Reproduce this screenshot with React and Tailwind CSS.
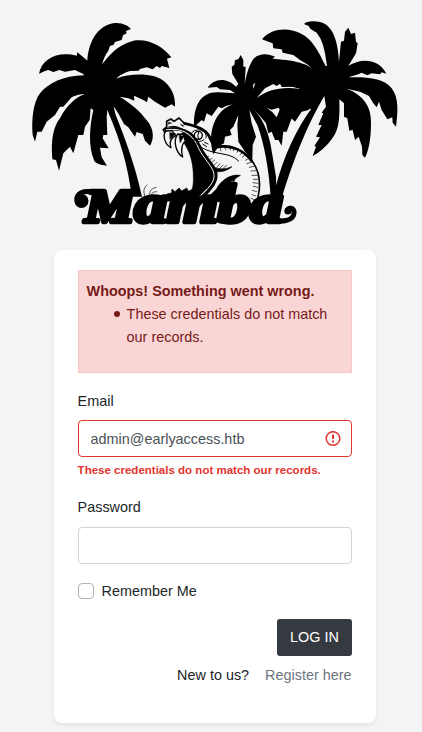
import React from "react";

function LeftPalm() {
  return (
    <g transform="translate(20 10) scale(.33333)">
      <path d="M202 152 C205 100 230 45 285 39 C310 38 325 48 333 57 L318 63 L320 70 L309 76 L305 90 L285 96 L281 104 L270 108 L265 122 C255 135 250 150 246 163 C265 140 290 105 340 92 C385 84 430 110 454 142 L441 146 L448 174 L425 168 L420 174 L410 168 L398 178 L380 172 L360 177 L356 182 L330 183 C315 187 300 195 288 206 C320 192 370 190 400 198 C440 208 468 245 465 290 L455 283 L435 293 L405 275 L385 260 L381 277 L370 270 L342 257 L343 272 L325 265 L299 260 C340 285 365 310 375 325 C405 355 402 390 390 407 L375 392 L368 372 L350 366 L345 380 L325 352 L312 342 L296 312 L281 289 L286 312 C315 385 345 465 366 560 L335 560 C325 470 300 390 266 310 L262 300 L260 320 L262 375 L250 375 L248 385 L266 415 L240 413 L245 442 L261 467 C240 465 225 460 222 450 C205 410 208 350 220 300 L212 295 L209 330 L195 350 L190 375 L175 375 L160 430 L150 410 L130 430 L117 482 L108 450 L97 448 C92 390 100 350 120 325 C140 285 170 260 195 252 C180 252 165 257 155 262 L130 290 L120 290 L105 315 L80 335 L65 365 L52 365 L45 395 L38 375 C34 330 40 275 60 250 C85 220 130 197 192 196 L190 192 L165 180 L135 185 L118 180 L100 186 L85 180 L75 183 L57 191 C65 145 115 122 170 137 L172 127 L200 150 Z" />
    </g>
  );
}

function MiddlePalm() {
  return (
    <g transform="translate(180 10) scale(.33333)">
      <path d="M175 222 L157 192 L155 170 L163 165 L165 150 L175 148 L182 135 L190 150 L190 170 L197 170 L194 225 C199 190 210 160 222 145 C242 128 265 132 285 140 L274 150 C310 145 345 152 380 165 L425 195 L420 218 L352 235 L320 225 L305 218 L290 228 L280 222 L255 235 L230 264 C270 232 330 225 395 245 L401 285 L385 300 L365 305 L345 335 L335 325 L320 365 L310 365 L305 407 L295 390 L285 390 L275 365 L265 370 L258 340 L240 318 L222 298 C245 325 262 355 272 405 L288 500 L290 565 L272 565 C268 485 253 400 232 345 L208 300 L215 340 L228 380 L218 405 L217 450 L195 425 L175 395 L172 345 L175 315 L160 350 L150 360 L155 375 L135 380 L132 400 L115 410 L100 433 C80 370 105 295 165 281 L140 287 L125 295 L115 290 L95 318 L80 310 L72 335 L65 330 L42 352 C40 290 60 245 115 247 L165 250 L150 240 L120 238 L110 231 L83 233 C100 205 140 200 168 230 Z" />
      <path fill="#f3f4f6" d="M261 294 L275 299 L296 293 L299 299 L290 322 Q278 304 261 294 Z M219 224 L226 218 L220 237 Z" />
    </g>
  );
}

function RightPalm() {
  return (
    <g transform="translate(280 10) scale(.33333)">
      <path d="M141 168 L135 130 L129 105 L121 85 L110 68 L92 57 L85 47 L73 43 C70 34 115 28 135 42 C165 60 175 110 177 155 L183 95 L192 92 L195 65 L205 53 L213 72 L225 68 L228 95 L233 100 L228 130 L205 168 C240 145 295 143 319 191 L305 187 L300 193 L275 190 L262 196 L245 188 L235 193 L205 202 C260 200 315 205 335 235 C358 265 353 310 348 350 L338 338 L337 322 L322 328 L305 300 L297 275 L290 292 L280 280 L267 258 L240 245 L200 236 C250 255 275 290 273 340 C273 390 265 425 255 443 L247 435 L246 410 L236 380 L225 390 L218 360 L208 362 L202 325 L192 320 L192 280 L178 268 C180 330 175 360 160 380 C140 410 120 425 98 438 L108 410 L103 408 L120 382 L108 380 L125 345 L115 345 L130 310 L125 308 L138 290 L133 258 C93 325 45 430 5 565 L-14 565 L-14 535 C10 440 50 355 97 292 L107 270 L95 300 L78 285 L65 300 L40 330 L30 322 L40 245 L60 238 L48 230 L5 231 L-2 217 L-50 210 L-55 145 C20 145 90 170 120 205 L85 165 L60 150 L40 135 L8 128 L5 118 L-20 115 L-22 100 L-35 95 L-54 88 C-30 60 5 54 40 62 C95 75 115 125 137 168 Z" />
    </g>
  );
}

function Snake() {
  return (
    <g transform="translate(150 105) scale(.33333)" stroke="#000" strokeLinecap="round" strokeLinejoin="round">
      {/* head and coiled body */}
      <path fill="none" strokeWidth="5" d="M45 84 L40 74 L50 66 L50 49 L63 42 L72 49 L87 39 L103 55 C132 64 158 69 177 91 C186 104 181 119 202 126 C244 116 285 137 307 169 C338 213 332 260 315 305" />
      <path strokeWidth="8" fill="none" d="M103 55 C132 61 165 71 176 91 C184 107 185 119 202 126 C244 118 283 137 305 168" />
      {/* open mouth */}
      <path strokeWidth="2" d="M99 82 C142 99 158 153 187 181 C207 207 193 238 165 256 L136 288 L35 288 L50 269 L125 258 C132 239 130 218 130 207 C129 170 119 137 100 111 L89 95 Z" />
      <path fill="none" strokeWidth="10" d="M48 73 C97 67 128 83 144 116 C158 151 184 172 196 198 C204 225 187 249 151 281" />
      <path fill="none" stroke="#f3f4f6" strokeWidth="3" d="M49 74 C98 68 124 86 141 119 C153 152 179 173 190 199 C198 224 184 242 153 270" />
      <path fill="#000" strokeWidth="2" d="M270 211 C239 206 211 229 199 253 L160 290 L215 290 L222 260 L237 232 L251 226 L243 243 L256 221 Z" />
      {/* fangs */}
      <path fill="#f3f4f6" strokeWidth="4" d="M48 78 C36 91 45 119 63 128 C56 112 62 101 77 91 L66 77 Z M83 87 C68 108 78 143 98 156 C92 133 96 116 106 108 L99 88 Z" />
      <path strokeWidth="2" d="M60 83 L76 86 L61 102 Z M88 91 L101 94 L91 112 Z" />
      <path strokeWidth="1" d="M54 66 Q72 60 87 67 L98 72 L74 68 Z M92 57 L103 64 L96 63 Z M56 52 L66 54 L54 58 Z" />
      {/* eye */}
      <ellipse cx="145" cy="91" rx="12" ry="12" fill="#f3f4f6" strokeWidth="4" />
      <path fill="none" strokeWidth="3" d="M146 81 Q141 91 145 101 M122 88 Q129 72 153 75 Q173 84 168 99 M131 103 Q147 116 162 104 M140 115 L151 122 M164 112 L174 117 M158 117 L170 125" />
      {/* jaw, throat and belly folds */}
      <path fill="none" strokeWidth="3" d="M151 124 C171 142 206 143 237 151 Q257 157 266 168" />
      <path fill="none" strokeWidth="2" d="M166 157 L176 154 M174 167 L186 160 M182 175 L194 165 M189 184 L201 172 M198 190 L210 176 M207 192 L219 180 M218 191 L230 181" />
      <path strokeWidth="2" d="M189 186 Q216 198 246 185 Q225 203 196 200 Z" />
      <path fill="none" strokeWidth="2" d="M209 126 L213 138 M223 122 L227 135 M239 122 L241 135 M252 127 L251 137 M266 133 L261 142 M277 142 L270 150 M286 149 L277 157 M296 160 L286 166 M304 172 L290 176 M312 184 L298 187 M318 197 L303 198 M322 211 L306 211 M324 223 L310 223 M324 235 L309 233 M323 247 L310 244 M320 260 L307 256 M317 273 L306 269 M313 284 L303 280" />
      {/* torn lower edge */}
      <path strokeWidth="2" d="M40 284 L51 267 L65 264 L66 252 L75 260 L87 249 L95 258 L110 249 L115 259 L127 253 L132 285 Z" />
      <path fill="none" strokeWidth="2" d="M-1 282 Q-7 251 18 247 M6 281 Q-2 259 20 260 M-16 272 Q-24 250 -9 240 M18 284 Q23 272 37 275" />
    </g>
  );
}

function Logo() {
  return (
    <svg className="block h-[250px] w-[422px]" viewBox="0 0 422 250" role="img" aria-label="Mamba">
      <Snake />
      <LeftPalm />
      <MiddlePalm />
      <RightPalm />
      <text
        x="85"
        y="221.5"
        textLength="198"
        lengthAdjust="spacingAndGlyphs"
        className="font-['Liberation_Serif',serif] font-bold italic"
        stroke="#000"
        strokeWidth="4.6"
        strokeLinejoin="round"
      >
        <tspan className="text-[46px]">M</tspan>
        <tspan className="text-[54px]">amba</tspan>
      </text>
      {/* swashes at both ends of the name */}
      <g fill="none" stroke="#000" strokeLinecap="round">
        <path strokeWidth="5" d="M104 191.5 H88 C77 191.5 74 199 80 204" />
        <circle cx="81.5" cy="201" r="5.5" fill="#000" strokeWidth="3" />
        <path strokeWidth="5" d="M272 219 C281 223 293 221 294 213.5 C295 207 287 207 287 211" />
        <circle cx="288" cy="211" r="2.5" fill="#000" strokeWidth="2" />
      </g>
    </svg>
  );
}

function AlertIcon() {
  return (
    <svg className="h-4 w-4" viewBox="0 0 16 16" fill="none" stroke="#e3342f">
      <circle cx="8" cy="7.5" r="6.8" strokeWidth="1.5" />
      <path d="M8 3.6V8.1" strokeWidth="2" />
      <path d="M8 9.6V11.5" strokeWidth="2" />
    </svg>
  );
}

export default function App() {
  return (
    <div className="h-[732px] w-[422px] overflow-hidden bg-[#f3f4f6] font-['Liberation_Sans',Arial,sans-serif] text-[14.4px] leading-[23px] text-[#212529]">
      <Logo />
      <main className="mr-[46px] ml-[54px] h-[473px] rounded-lg bg-white pt-5 pr-6 pl-[23.6px] shadow-[0_2px_4px_rgba(0,0,0,0.075)]">
        <div className="h-[103px] border border-[#f7c6c5] bg-[#f9d6d5] px-2 pt-[9px] text-[#761b18]">
          <div className="font-bold">Whoops! Something went wrong.</div>
          <ul className="pl-10">
            <li className="flex">
              <span className="mt-2 mr-[7px] -ml-[13px] h-1.5 w-1.5 shrink-0 rounded-full bg-[#761b18]" />
              <span>These credentials do not match our records.</span>
            </li>
          </ul>
        </div>
        <form onSubmit={(e) => e.preventDefault()}>
          <label htmlFor="email" className="mt-[17px] block">Email</label>
          <div className="mt-[7px] flex h-[37px] items-center rounded border border-[#e3342f] pr-[10px] pl-3">
            <input id="email" defaultValue="admin@earlyaccess.htb" className="min-w-0 flex-1 pt-px text-[#495057] outline-none" />
            <AlertIcon />
          </div>
          <p className="mt-1 h-[18px] text-[11.52px] leading-[18px] font-bold text-[#e3342f]">These credentials do not match our records.</p>
          <label htmlFor="password" className="mt-[17px] block">Password</label>
          <input id="password" type="password" className="mt-2 block h-[37px] w-full rounded border border-[#ced4da] px-3 outline-none" />
          <label className="mt-[15px] flex h-6 items-center gap-2">
            <input type="checkbox" className="h-4 w-4 appearance-none rounded border border-[#adb5bd] bg-white" />
            <span>Remember Me</span>
          </label>
          <div className="mt-4 flex justify-end">
            <button className="h-[37px] w-[75px] rounded-[3px] bg-[#343a40] text-white">LOG IN</button>
          </div>
          <div className="mt-2 mr-[0.5px] flex justify-end gap-4">
            <span>New to us?</span>
            <a href="#" className="text-[#6c757d]">Register here</a>
          </div>
        </form>
      </main>
    </div>
  );
}
